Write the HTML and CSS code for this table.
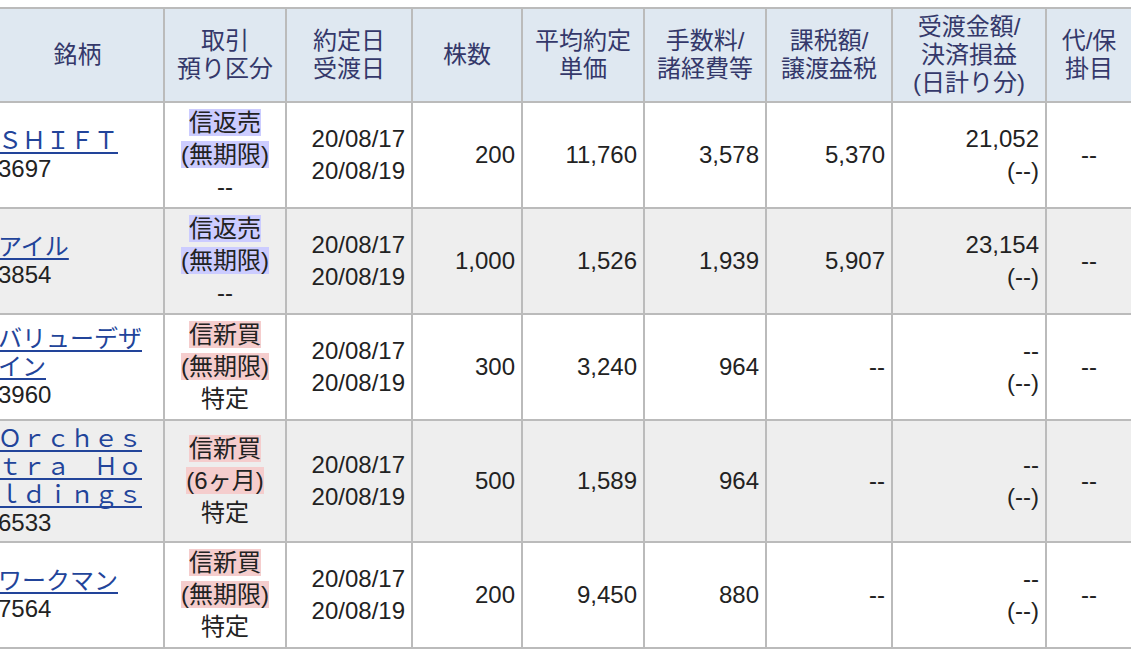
FILE: index.html
```html
<!DOCTYPE html>
<html lang="ja">
<head>
<meta charset="utf-8">
<title>約定履歴</title>
<link rel="stylesheet" href="styles.css">
</head>
<body>
<div class="page">
<table class="trades">
  <colgroup>
    <col class="w-name">
    <col class="w-kind">
    <col class="w-date">
    <col class="w-qty">
    <col class="w-price">
    <col class="w-fee">
    <col class="w-tax">
    <col class="w-amount">
    <col class="w-dai">
  </colgroup>
  <thead>
    <tr>
      <th>銘柄</th>
      <th>取引<br>預り区分</th>
      <th>約定日<br>受渡日</th>
      <th>株数</th>
      <th>平均約定<br>単価</th>
      <th>手数料/<br>諸経費等</th>
      <th>課税額/<br>譲渡益税</th>
      <th>受渡金額/<br>決済損益<br>(日計り分)</th>
      <th>代/保<br>掛目</th>
    </tr>
  </thead>
  <tbody>
    <tr>
      <td class="name"><a class="stock" href="#">ＳＨＩＦＴ</a><br>3697</td>
      <td class="kind"><span class="sell">信返売</span><br><span class="sell">(無期限)</span><br>--</td>
      <td>20/08/17<br>20/08/19</td>
      <td>200</td>
      <td>11,760</td>
      <td>3,578</td>
      <td>5,370</td>
      <td>21,052<br>(--)</td>
      <td class="dai">--</td>
    </tr>
    <tr class="stripe">
      <td class="name"><a class="stock" href="#">アイル</a><br>3854</td>
      <td class="kind"><span class="sell">信返売</span><br><span class="sell">(無期限)</span><br>--</td>
      <td>20/08/17<br>20/08/19</td>
      <td>1,000</td>
      <td>1,526</td>
      <td>1,939</td>
      <td>5,907</td>
      <td>23,154<br>(--)</td>
      <td class="dai">--</td>
    </tr>
    <tr>
      <td class="name"><a class="stock" href="#">バリューデザイン</a><br>3960</td>
      <td class="kind"><span class="buy">信新買</span><br><span class="buy">(無期限)</span><br>特定</td>
      <td>20/08/17<br>20/08/19</td>
      <td>300</td>
      <td>3,240</td>
      <td>964</td>
      <td>--</td>
      <td>--<br>(--)</td>
      <td class="dai">--</td>
    </tr>
    <tr class="stripe">
      <td class="name"><a class="stock" href="#">Ｏｒｃｈｅｓｔｒａ　Ｈｏｌｄｉｎｇｓ</a><br>6533</td>
      <td class="kind"><span class="buy">信新買</span><br><span class="buy">(6ヶ月)</span><br>特定</td>
      <td>20/08/17<br>20/08/19</td>
      <td>500</td>
      <td>1,589</td>
      <td>964</td>
      <td>--</td>
      <td>--<br>(--)</td>
      <td class="dai">--</td>
    </tr>
    <tr>
      <td class="name"><a class="stock" href="#">ワークマン</a><br>7564</td>
      <td class="kind"><span class="buy">信新買</span><br><span class="buy">(無期限)</span><br>特定</td>
      <td>20/08/17<br>20/08/19</td>
      <td>200</td>
      <td>9,450</td>
      <td>880</td>
      <td>--</td>
      <td>--<br>(--)</td>
      <td class="dai">--</td>
    </tr>
  </tbody>
</table>
</div>
</body>
</html>
```

FILE: styles.css
```css
html, body {
  margin: 0;
  padding: 0;
  background: #ffffff;
}

html {
  overflow: hidden;
}

body {
  font-family: "Liberation Sans", "Noto Sans CJK JP", sans-serif;
  font-size: 24px;
  color: #222222;
}

.page {
  padding-top: 7px;
}

.trades {
  margin-left: -10px;
  width: 1143px;
  table-layout: fixed;
  border-collapse: separate;
  border-spacing: 0;
  border: 1px solid #bbbbbb;
}

.w-name { width: 173px; }
.w-kind { width: 122px; }
.w-date { width: 126px; }
.w-qty { width: 110px; }
.w-price { width: 122px; }
.w-fee { width: 122px; }
.w-tax { width: 126px; }
.w-amount { width: 154px; }
.w-dai { width: 86px; }

.trades th,
.trades td {
  border: 1px solid #bbbbbb;
  padding: 4px 6px;
  font-weight: normal;
  vertical-align: middle;
}

.trades th {
  background: #dfe8f1;
  color: #34386a;
  line-height: 28px;
  text-align: center;
}

.trades td {
  line-height: 32px;
  text-align: right;
}

.trades td.name {
  text-align: left;
  line-height: 28px;
}

.trades td.kind,
.trades td.dai {
  text-align: center;
}

.trades .stripe td {
  background: #eeeeee;
}

.stock {
  color: #22449a;
  text-decoration: underline;
  text-decoration-thickness: 2px;
  text-underline-offset: 3px;
}

.sell {
  background: #ccccff;
}

.buy {
  background: #f5cdcd;
}
```
